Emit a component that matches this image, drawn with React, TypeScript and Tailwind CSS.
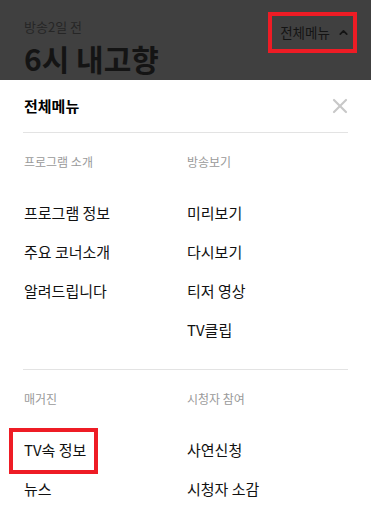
import { ChevronUp, X } from "lucide-react";

const sections = [
  [
    { title: "프로그램 소개", items: ["프로그램 정보", "주요 코너소개", "알려드립니다"] },
    { title: "방송보기", items: ["미리보기", "다시보기", "티저 영상", "TV클립"] },
  ],
  [
    { title: "매거진", items: ["TV속 정보", "뉴스"] },
    { title: "시청자 참여", items: ["사연신청", "시청자 소감"] },
  ],
];

export default function App() {
  return (
    <div
      className="h-[523px] w-[371px] overflow-hidden bg-white"
      style={{ fontFamily: '"Noto Sans CJK KR", "Noto Sans", sans-serif' }}
    >
      <header className="relative flex h-[80px] items-start justify-between bg-[#404040] pl-6 pr-[14px]">
        <div className="pt-[18px]">
          <p className="text-[13px] leading-[18px] text-[#262626]">방송2일 전</p>
          <h1 className="mt-[5px] text-[30px] font-bold leading-[34px] text-[#141414]">6시 내고향</h1>
        </div>
        <div className="mt-[12px] flex h-[41px] w-[89px] items-center justify-center gap-[7px] border-[4px] border-[#ee1c25] pl-[5px]">
          <span className="text-[13.5px] text-[#141414]">전체메뉴</span>
          <ChevronUp size={13} strokeWidth={3.2} className="text-[#141414]" />
        </div>
      </header>

      <div className="flex h-[52px] items-center justify-between pl-6 pr-[19px]">
        <h2 className="text-[15px] font-bold text-black">전체메뉴</h2>
        <X size={24} strokeWidth={2.2} className="text-[#c8c8c8]" />
      </div>

      {sections.map((row, i) => (
        <section key={i} className="mx-[23px] border-t border-[#e3e3e3] pb-[20px] pt-[19px]">
          <div className="grid grid-cols-[163px_1fr]">
            {row.map((col) => (
              <div key={col.title} className="pl-px">
                <h3 className="text-[12px] leading-[20px] text-[#9a9a9a]">{col.title}</h3>
                <ul className="mt-[21px]">
                  {col.items.map((item) => (
                    <li key={item} className="relative text-[15px] leading-[39px] text-[#111]">
                      {item === "TV속 정보" && (
                        <span className="absolute -left-[15px] top-[-2px] h-[46px] w-[89px] border-[4px] border-[#ee1c25]" />
                      )}
                      <span className="relative">{item}</span>
                    </li>
                  ))}
                </ul>
              </div>
            ))}
          </div>
        </section>
      ))}
    </div>
  );
}
